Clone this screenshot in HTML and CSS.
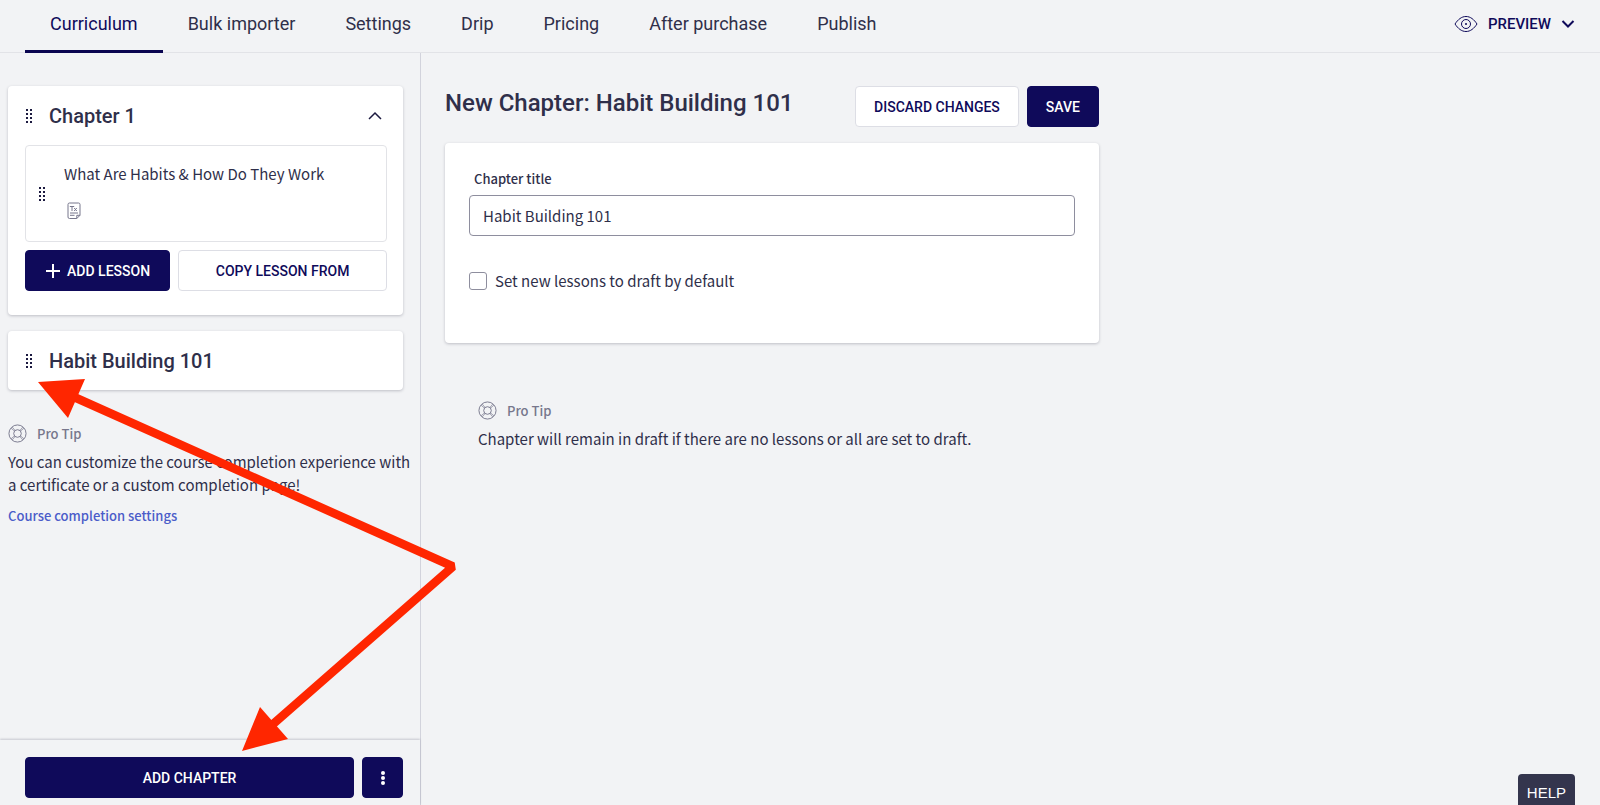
FILE: index.html
```html
<!DOCTYPE html>
<html lang="en">
<head>
<meta charset="utf-8">
<title>Curriculum</title>
<link rel="stylesheet" href="styles.css">
</head>
<body>
<svg class="defs" aria-hidden="true">
  <symbol id="grip" viewBox="0 0 8 16">
    <path d="M2 1v14M6 1v14" stroke="currentColor" stroke-width="2" stroke-dasharray="2 2"/>
  </symbol>
  <symbol id="buoy" viewBox="0 0 20 20">
    <g fill="none" stroke="currentColor"><circle cx="10" cy="10" r="9"/><circle cx="10" cy="10" r="4"/><path d="M3.2 4.4 7 7.6M4.4 3.2 7.6 7M16.8 4.4 13 7.6M15.6 3.2 12.4 7M3.2 15.6 7 12.4M4.4 16.8 7.6 13M16.8 15.6 13 12.4M15.6 16.8 12.4 13" stroke-width=".7"/></g>
  </symbol>
</svg>
<div class="app">
  <header class="topbar">
    <nav class="tabs">
      <a class="tab active" href="#">Curriculum</a>
      <a class="tab" href="#">Bulk importer</a>
      <a class="tab" href="#">Settings</a>
      <a class="tab" href="#">Drip</a>
      <a class="tab" href="#">Pricing</a>
      <a class="tab" href="#">After purchase</a>
      <a class="tab" href="#">Publish</a>
    </nav>
    <button class="preview" type="button">
      <svg width="24" height="18" viewBox="0 0 24 18" fill="none" stroke="currentColor"><path d="M1 9C4 4.500 7.500 1.500 12 1.500S20 4.500 23 9c-3 4.500-6.500 7.500-11 7.500S4 13.500 1 9z"/><circle cx="12" cy="9" r="4.500"/><circle cx="12" cy="9" r="1" fill="currentColor" stroke="none"/></svg>
      <span>PREVIEW</span>
      <svg width="14" height="10" viewBox="0 0 14 10" fill="none" stroke="currentColor" stroke-width="2"><path d="m1.500 2 5.500 5.500L12.500 2"/></svg>
    </button>
  </header>
  <div class="body">
    <aside class="sidebar">
      <div class="outline">
        <section class="card chapter">
          <div class="chapter-head">
            <svg class="grip"><use href="#grip"/></svg>
            <h2>Chapter 1</h2>
            <button class="toggle" type="button" aria-label="Collapse chapter"><svg width="14" height="10" viewBox="0 0 14 10" fill="none" stroke="currentColor" stroke-width="1.500"><path d="m1 8 6-6 6 6"/></svg></button>
          </div>
          <div class="lesson">
            <svg class="grip"><use href="#grip"/></svg>
            <div class="lesson-info">
              <a href="#">What Are Habits &amp; How Do They Work</a>
              <svg class="doc" width="14" height="18" viewBox="0 0 14 18" fill="none" stroke="currentColor"><path d="M2.500 1h9A1.500 1.500 0 0 1 13 2.500v10.800L9.800 16.500H2.500A1.500 1.500 0 0 1 1 15V2.500A1.500 1.500 0 0 1 2.500 1zM13 13.300H9.800v3.200M3 11h8M3 13.300h4.500"/><path d="M2.800 4.500h4.400M5 4.500V9M7.200 6l2.600 3M9.800 6 7.200 9"/></svg>
            </div>
          </div>
          <div class="lesson-actions">
            <button class="btn primary add-lesson" type="button"><svg width="16" height="16" viewBox="0 0 16 16" stroke="currentColor" stroke-width="2"><path d="M8 1v14M1 8h14"/></svg>ADD LESSON</button>
            <button class="btn copy" type="button">COPY LESSON FROM</button>
          </div>
        </section>
        <section class="card chapter-head collapsed">
          <svg class="grip"><use href="#grip"/></svg>
          <h2>Habit Building 101</h2>
        </section>
        <div class="tip sidebar-tip">
          <div class="tip-head"><svg width="19" height="19"><use href="#buoy"/></svg><span>Pro Tip</span></div>
          <p>You can customize the course completion experience with a certificate or a custom completion page!</p>
          <a href="#">Course completion settings</a>
        </div>
      </div>
      <div class="sidebar-foot">
        <button class="btn primary add-chapter" type="button">ADD CHAPTER</button>
        <button class="btn primary more" type="button" aria-label="More actions"><svg width="6" height="16" viewBox="0 0 6 16" fill="currentColor"><circle cx="3" cy="3" r="2"/><circle cx="3" cy="8" r="2"/><circle cx="3" cy="13" r="2"/></svg></button>
      </div>
    </aside>
    <main class="editor">
      <div class="editor-head">
        <h1>New Chapter: Habit Building 101</h1>
        <button class="btn" type="button">DISCARD CHANGES</button>
        <button class="btn primary" type="button">SAVE</button>
      </div>
      <form class="card form">
        <label class="field-label" for="title">Chapter title</label>
        <input class="field" id="title" type="text" value="Habit Building 101">
        <div class="check"><input id="draft" type="checkbox"><label for="draft">Set new lessons to draft by default</label></div>
      </form>
      <div class="tip editor-tip">
        <div class="tip-head"><svg width="19" height="19"><use href="#buoy"/></svg><span>Pro Tip</span></div>
        <p>Chapter will remain in draft if there are no lessons or all are set to draft.</p>
      </div>
    </main>
  </div>
  <button class="help" type="button">HELP</button>
  <svg class="arrows" width="480" height="805" viewBox="0 0 480 805" aria-hidden="true">
    <path d="M74 397 453 566.500 272 725" fill="none" stroke="#ff2600" stroke-width="8.500" stroke-linejoin="bevel"/>
    <path d="M38 382 85 379 68 418zM242 751 260 707 288 739z" fill="#ff2600"/>
  </svg>
</div>
</body>
</html>
```
FILE: styles.css
```css
* { box-sizing: border-box; }
body {
  margin: 0;
  background: #f2f3f5;
  color: #2f2f4a;
  font: 15px/23px "Noto Sans CJK SC", sans-serif;
}
h1, h2, p { margin: 0; }
a { color: inherit; text-decoration: none; }
button { font-family: Roboto, sans-serif; cursor: pointer; }
svg { display: block; flex: none; }
.defs { position: absolute; width: 0; height: 0; }

.app { position: relative; display: flex; flex-direction: column; height: 100vh; overflow: hidden; }
.topbar {
  display: flex;
  justify-content: space-between;
  padding: 0 25px;
  border-bottom: 1px solid #e2e3e7;
}
.tabs { display: flex; margin-bottom: -1px; }
.tab {
  padding: 12px 25px 14px;
  border-bottom: 3px solid transparent;
  font: 18px/24px Roboto, sans-serif;
}
.tab.active { color: #0f0a5a; border-color: #0a0550; }
.preview {
  display: flex;
  align-items: center;
  gap: 10px;
  height: 48px;
  padding: 0;
  border: 0;
  background: none;
  color: #0f0a5a;
  font-size: 15px;
  font-weight: 500;
}

.body { display: flex; flex: 1; min-height: 0; }
.sidebar {
  display: flex;
  flex-direction: column;
  width: 421px;
  border-right: 1px solid #d2d3dc;
}
.outline { flex: 1; padding: 33px 17px 0 8px; }
.card { background: #fff; border-radius: 4px; box-shadow: 0 1px 3px rgba(30, 30, 60, .25); }
.chapter { padding: 0 16px 24px 17px; margin-bottom: 16px; }
.chapter-head { display: flex; align-items: center; height: 59px; }
.chapter-head h2 { flex: 1; margin-left: 16px; font: 500 20px/28px Roboto, sans-serif; }
.collapsed { padding: 0 16px 0 17px; }
.grip { width: 8px; height: 16px; color: #1c1a40; }
.toggle { padding: 5px; border: 0; background: none; color: #1c1a40; }
.lesson {
  display: flex;
  align-items: center;
  height: 97px;
  padding: 0 12px;
  border: 1px solid #e2e3e7;
  border-radius: 4px;
}
.lesson-info { margin-left: 18px; padding-bottom: 5px; }
.doc { margin: 17px 0 0 3px; color: #77778c; }
.lesson-actions { display: flex; gap: 8px; margin-top: 8px; }

.btn {
  display: flex;
  align-items: center;
  justify-content: center;
  gap: 6px;
  height: 41px;
  padding: 0 18px;
  border: 1px solid #dddee5;
  border-radius: 4px;
  background: #fff;
  color: #0f0a5a;
  font-size: 14px;
  font-weight: 500;
  white-space: nowrap;
}
.primary { border-color: #0f0a5a; background: #0f0a5a; color: #fff; }
.lesson-actions .btn { padding: 0 8px; }
.add-lesson { flex: 2; }
.copy { flex: 3; }

.tip { padding-top: 32px; }
.sidebar-tip { margin-right: -12px; }
.tip-head { display: flex; align-items: center; gap: 10px; height: 22px; margin-bottom: 6px; color: #77778c; font-weight: 500; font-size: 13px; }
.tip a { display: block; margin-top: 8px; color: #4b5cc9; font-size: 13px; font-weight: 500; }
.sidebar-foot {
  display: flex;
  gap: 8px;
  padding: 17px 17px 7px 25px;
  box-shadow: 0 -1px 2px rgba(30, 30, 60, .2);
}
.add-chapter { flex: 1; }
.more { width: 41px; padding: 0; }

.editor { flex: 1; max-width: 678px; padding: 33px 0 0 24px; }
.editor-head { display: flex; gap: 8px; margin-bottom: 16px; }
.editor-head h1 { flex: 1; font: 500 24px/34px Roboto, sans-serif; }
.form { padding: 24px 24px 51px; }
.field-label { display: block; padding: 0 5px; margin-bottom: 5px; font-size: 13px; font-weight: 500; }
.field {
  display: block;
  width: 100%;
  height: 41px;
  padding: 0 13px;
  border: 1px solid #8e8e9e;
  border-radius: 4px;
  color: inherit;
  font: inherit;
}
.check { display: flex; align-items: center; gap: 8px; margin-top: 33px; }
.check input { appearance: none; width: 18px; height: 18px; margin: 0; border: 1px solid #8e8e9e; border-radius: 3px; background: #fff; }
.editor-tip { padding: 56px 33px 0; }

.help {
  position: absolute;
  right: 25px;
  bottom: 0;
  padding: 9px 9px 3px;
  border: 0;
  border-radius: 4px 4px 0 0;
  background: #34354d;
  color: #fff;
  font: 15px/19px "Liberation Sans", sans-serif;
}
.arrows { position: absolute; left: 0; top: 0; pointer-events: none; }
```
